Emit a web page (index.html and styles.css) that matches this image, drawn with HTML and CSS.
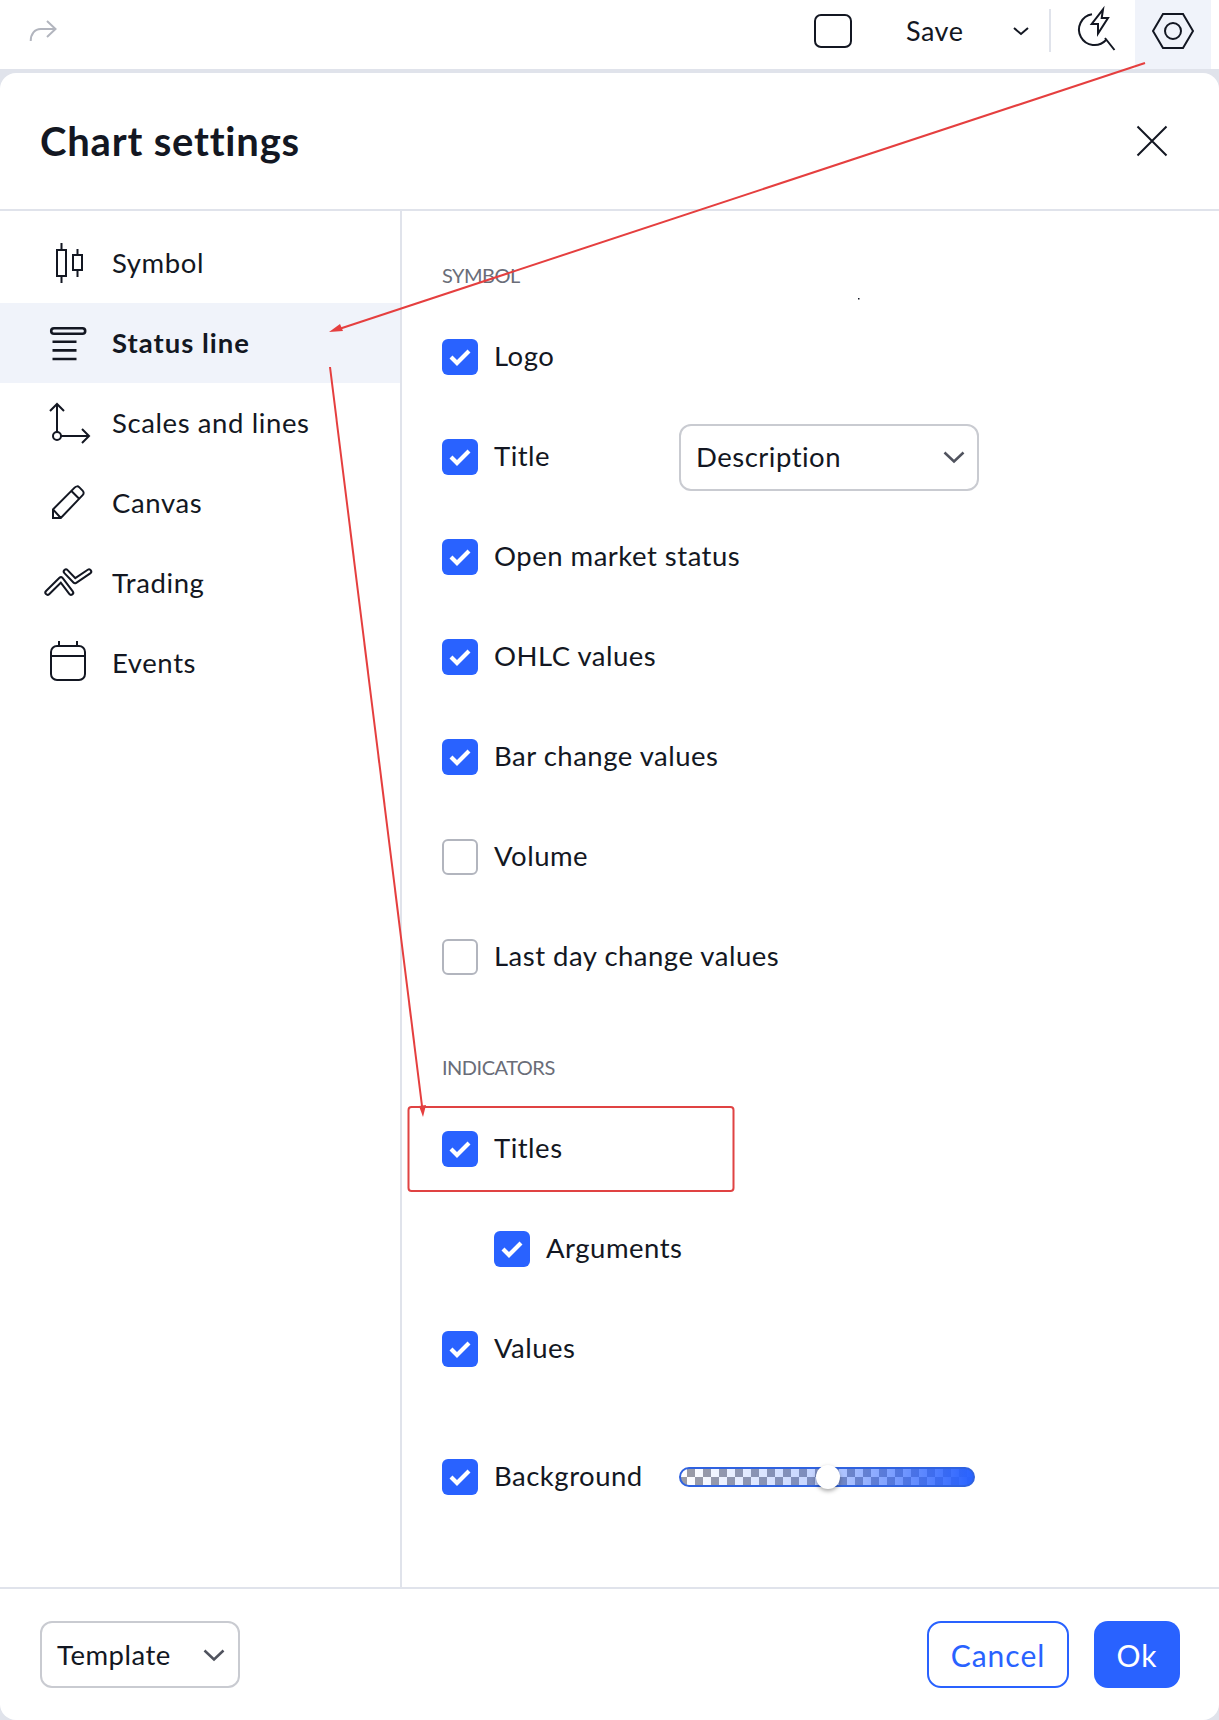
FILE: index.html
```html
<!DOCTYPE html>
<html lang="en">
<head>
<meta charset="utf-8">
<title>Chart settings</title>
<link rel="stylesheet" href="styles.css">
</head>
<body>
<div class="page">
  <header class="topbar">
    <svg class="tb-icon redo" viewBox="0 0 56 56"><path d="M15.700 38c0-7 4-12 10-12h15M32 18l8.500 8-8.500 8"/></svg>
    <div class="spacer"></div>
    <svg class="tb-icon square" viewBox="0 0 56 56"><rect x="10" y="12" width="36" height="32" rx="6"/></svg>
    <span class="save">Save</span>
    <svg class="tb-icon chev" viewBox="0 0 56 56"><path d="M21 25l7 6 7-6"/></svg>
    <div class="divider"></div>
    <svg class="tb-icon bolt" viewBox="0 0 56 56"><path d="M23 11.300A15.500 15.500 0 1 0 37 37M36 35l9.500 12"/><path class="bolt-fill" d="M34 6.300L22.700 21H29v9.500L39 15h-6.300z"/></svg>
    <div class="hex-btn"><svg class="tb-icon" viewBox="0 0 56 56"><path d="M8 28l10-17h20l10 17-10 17H18z"/><circle cx="28" cy="28" r="8"/></svg></div>
  </header>

  <main class="modal">
    <div class="modal-head">
      <h1>Chart settings</h1>
      <svg class="close" viewBox="0 0 32 32"><path d="M1.500 1.500l29 29M30.500 1.500l-29 29"/></svg>
    </div>
    <div class="modal-body">
      <nav class="side">
        <div class="nav-item">
          <svg class="nav-icon" viewBox="0 0 28 28"><path d="M10.750 4v3.500M10.750 20.500V24M8.500 7.500H13v13H8.500zM18.750 7v3M18.750 17.500V21M16.500 10H21v7.500h-4.500z"/></svg>
          <span class="nav-text">Symbol</span>
        </div>
        <div class="nav-item active">
          <svg class="nav-icon" viewBox="0 0 28 28"><rect class="pill" x="5.600" y="6.600" width="17" height="2.800" rx="1.400"/><path class="thick" d="M6.250 13.400h12M6.250 17.700h12M6.250 22h12"/></svg>
          <span class="nav-text">Status line</span>
        </div>
        <div class="nav-item">
          <svg class="nav-icon" viewBox="0 0 28 28"><path d="M8.500 18.500V5M5 8l3.500-3.500L12 8M10.500 20.500H24.500M21 17l3.500 3.500L21 24"/><circle cx="8.500" cy="20.500" r="2"/></svg>
          <span class="nav-text">Scales and lines</span>
        </div>
        <div class="nav-item">
          <svg class="nav-icon" viewBox="0 0 28 28"><path d="M6.500 21.500v-4.300L17.300 6.300c.8-.8 1.700-.8 2.400-.1l1.600 1.600c.7.7.7 1.600-.1 2.400L10.400 21.500zM6.500 17.200l3.900 4.300M15.700 8l4 4"/></svg>
          <span class="nav-text">Canvas</span>
        </div>
        <div class="nav-item">
          <svg class="nav-icon" viewBox="0 0 28 28"><path class="trade-o" d="M3.800 18.800l6.700-6.600 5 6.600"/><path class="trade-i" d="M3.800 18.800l6.700-6.600 5 6.600"/><path class="trade-o" d="M13 8.300l4.500 4.700 7-4.700"/><path class="trade-i" d="M13 8.300l4.500 4.700 7-4.700"/></svg>
          <span class="nav-text">Trading</span>
        </div>
        <div class="nav-item">
          <svg class="nav-icon" viewBox="0 0 28 28"><rect x="5.500" y="5.500" width="17" height="17" rx="3"/><path d="M5.500 10.500h17M9.500 3v2.500M18.500 3v2.500"/></svg>
          <span class="nav-text">Events</span>
        </div>
      </nav>

      <section class="content">
        <div class="group-label">SYMBOL</div>
        <label class="row"><span class="cb on"><svg viewBox="0 0 36 36"><path d="M9 18l6 6 12-12"/></svg></span><span class="lbl">Logo</span></label>
        <label class="row"><span class="cb on"><svg viewBox="0 0 36 36"><path d="M9 18l6 6 12-12"/></svg></span><span class="lbl title-label">Title</span>
          <span class="select desc"><span class="lbl">Description</span><svg viewBox="0 0 24 24"><path d="M2.500 7.500l9.500 9 9.500-9"/></svg></span>
        </label>
        <label class="row"><span class="cb on"><svg viewBox="0 0 36 36"><path d="M9 18l6 6 12-12"/></svg></span><span class="lbl">Open market status</span></label>
        <label class="row"><span class="cb on"><svg viewBox="0 0 36 36"><path d="M9 18l6 6 12-12"/></svg></span><span class="lbl">OHLC values</span></label>
        <label class="row"><span class="cb on"><svg viewBox="0 0 36 36"><path d="M9 18l6 6 12-12"/></svg></span><span class="lbl">Bar change values</span></label>
        <label class="row"><span class="cb"></span><span class="lbl">Volume</span></label>
        <label class="row"><span class="cb"></span><span class="lbl">Last day change values</span></label>

        <div class="group-label second">INDICATORS</div>
        <label class="row"><span class="cb on"><svg viewBox="0 0 36 36"><path d="M9 18l6 6 12-12"/></svg></span><span class="lbl">Titles</span></label>
        <label class="row nested"><span class="cb on"><svg viewBox="0 0 36 36"><path d="M9 18l6 6 12-12"/></svg></span><span class="lbl">Arguments</span></label>
        <label class="row"><span class="cb on"><svg viewBox="0 0 36 36"><path d="M9 18l6 6 12-12"/></svg></span><span class="lbl">Values</span></label>
        <label class="row bg-row"><span class="cb on"><svg viewBox="0 0 36 36"><path d="M9 18l6 6 12-12"/></svg></span><span class="lbl bg-label">Background</span>
          <span class="slider"><span class="thumb"></span></span>
        </label>
      </section>
    </div>
    <footer class="modal-foot">
      <span class="select template"><span>Template</span><svg viewBox="0 0 24 24"><path d="M2.500 7.500l9.500 9 9.500-9"/></svg></span>
      <div class="spacer"></div>
      <button class="btn cancel" type="button">Cancel</button>
      <button class="btn ok" type="button">Ok</button>
    </footer>
  </main>

  <svg class="annotations" viewBox="0 0 1219 1720">
    <path class="arrow-line" d="M1145 63L336 330"/>
    <path class="arrow-head" d="M329 332l11-8 3 7z"/>
    <path class="arrow-line" d="M330 367L422 1106"/>
    <path class="arrow-head" d="M423 1117l-4-11 7-1z"/>
    <rect class="red-box" x="408.500" y="1107" width="325" height="84" rx="3"/>
    <rect class="speck" x="858" y="298" width="1.500" height="1.500"/>
  </svg>
</div>
</body>
</html>
```

FILE: styles.css
```css
* { box-sizing: border-box; }
html, body { margin: 0; padding: 0; }
body {
  background: #fff;
  color: #131722;
  font-family: Lato, "Noto Sans", "Liberation Sans", sans-serif;
  font-size: 27.500px;
  letter-spacing: .5px;
}
.page {
  position: relative;
  width: 1219px;
  height: 1720px;
  overflow: hidden;
  background: #e0e3eb;
  display: flex;
  flex-direction: column;
}
.spacer { flex: 1; }

/* top bar */
.topbar {
  height: 69px;
  flex: none;
  background: #fff;
  display: flex;
  align-items: flex-start;
  padding-top: 3px;
  padding-right: 8px;
  position: relative;
}
.tb-icon {
  width: 56px;
  height: 56px;
  flex: none;
  fill: none;
  stroke: #131722;
  stroke-width: 2;
}
.redo { margin-left: 15px; stroke: #b2b5be; }
.save {
  margin-left: 45px;
  line-height: 56px;
  width: 57px;
  white-space: nowrap;
  font-size: 27px;
}
.chev { margin-left: 30px; }
.divider {
  width: 2px;
  height: 43px;
  margin-top: 6px;
  background: #e0e3eb;
}
.bolt { margin-left: 18px; }
.hex-btn {
  width: 76px;
  height: 69px;
  margin-top: -3px;
  margin-left: 10px;
  padding: 3px 10px 0;
  background: #f0f3fa;
}

/* modal */
.modal {
  margin-top: 4px;
  flex: 1;
  background: #fff;
  border-radius: 16px;
  display: flex;
  flex-direction: column;
  min-height: 0;
}
.modal-head {
  height: 138px;
  flex: none;
  border-bottom: 2px solid #e0e3eb;
  display: flex;
  align-items: center;
  justify-content: space-between;
  padding: 0 51px 0 40px;
}
.modal-head h1 {
  margin: 0;
  font-size: 40px;
  font-weight: 700;
  line-height: 48px;
  letter-spacing: .8px;
}
.close {
  width: 32px;
  height: 32px;
  fill: none;
  stroke: #131722;
  stroke-width: 2;
}
.modal-body { flex: 1; display: flex; min-height: 0; }

/* sidebar */
.side {
  width: 402px;
  flex: none;
  border-right: 2px solid #e0e3eb;
  padding-top: 12px;
}
.nav-item {
  height: 80px;
  display: flex;
  align-items: center;
  gap: 16px;
  padding-left: 40px;
  letter-spacing: .6px;
}
.nav-text { padding-bottom: 2px; }
.nav-item.active { background: #f0f3fa; font-weight: 700; letter-spacing: 1px; }
.nav-icon {
  width: 56px;
  height: 56px;
  flex: none;
  fill: none;
  stroke: #131722;
  stroke-width: 1;
}
.nav-icon .thick { stroke-width: 1.300; }
.nav-icon .pill { stroke-width: 1.300; }
.trade-o { stroke-width: 3.200; stroke-linecap: round; stroke-linejoin: round; }
.trade-i { stroke: #fff; stroke-width: 1.200; stroke-linecap: round; stroke-linejoin: round; }

/* content */
.content { flex: 1; padding: 44px 0 0 40px; }
.group-label {
  height: 40px;
  line-height: 40px;
  font-size: 20px;
  letter-spacing: -.5px;
  color: #6a6d78;
  margin-bottom: 12px;
}
.group-label.second { margin-top: 40px; }
.row {
  height: 100px;
  display: flex;
  align-items: center;
  gap: 16px;
}
.lbl { padding-bottom: 4px; }
.nested { padding-left: 52px; }
.bg-row { margin-top: 28px; }
.cb {
  width: 36px;
  height: 36px;
  flex: none;
  border-radius: 6px;
  border: 2px solid #b2b5be;
  background: #fff;
}
.cb.on { border: 0; background: #2962ff; }
.cb svg {
  display: block;
  width: 36px;
  height: 36px;
  fill: none;
  stroke: #fff;
  stroke-width: 4.200;
}
.title-label { width: 169px; }
.bg-label { width: 169px; }
.select {
  display: flex;
  align-items: center;
  justify-content: space-between;
  height: 67px;
  background: #fff;
  border: 2px solid #c9cbd1;
  border-radius: 12px;
  padding: 0 11px 0 15px;
}
.select .lbl { padding-bottom: 2px; }
.select svg {
  width: 24px;
  height: 24px;
  fill: none;
  stroke: #50535e;
  stroke-width: 2.500;
}
.select.desc { width: 300px; }
.select.template { width: 200px; padding-right: 12px; }
.slider {
  position: relative;
  width: 296px;
  height: 20px;
  border: 2px solid #2f62e0;
  border-radius: 10px;
  background:
    linear-gradient(90deg, rgba(41,98,255,0) 0%, rgba(41,98,255,.3) 50%, #2962ff 100%),
    repeating-conic-gradient(#9b9ca6 0 25%, #fff 0 50%) -2px -2px / 16px 20px;
}
.thumb {
  position: absolute;
  left: 135px;
  top: -4px;
  width: 24px;
  height: 24px;
  border-radius: 50%;
  background: #fff;
  box-shadow: 0 2px 4px rgba(0,0,0,.35);
}

/* footer */
.modal-foot {
  height: 133px;
  flex: none;
  border-top: 2px solid #e0e3eb;
  display: flex;
  align-items: flex-start;
  padding: 32px 39px 0 40px;
  gap: 25px;
}
.btn {
  height: 67px;
  border-radius: 14px;
  font: inherit;
  font-size: 30px;
  letter-spacing: 1px;
  padding: 0;
}
.cancel { width: 142px; background: #fff; color: #2962ff; border: 2px solid #2962ff; }
.ok { width: 86px; background: #2962ff; color: #fff; border: 0; }

/* annotations */
.annotations {
  position: absolute;
  left: 0;
  top: 0;
  width: 1219px;
  height: 1720px;
  pointer-events: none;
}
.arrow-line { fill: none; stroke: #e53f3f; stroke-width: 2; }
.arrow-head { fill: #e53f3f; }
.red-box { fill: none; stroke: #e04343; stroke-width: 2; }
.speck { fill: #131722; }
```
